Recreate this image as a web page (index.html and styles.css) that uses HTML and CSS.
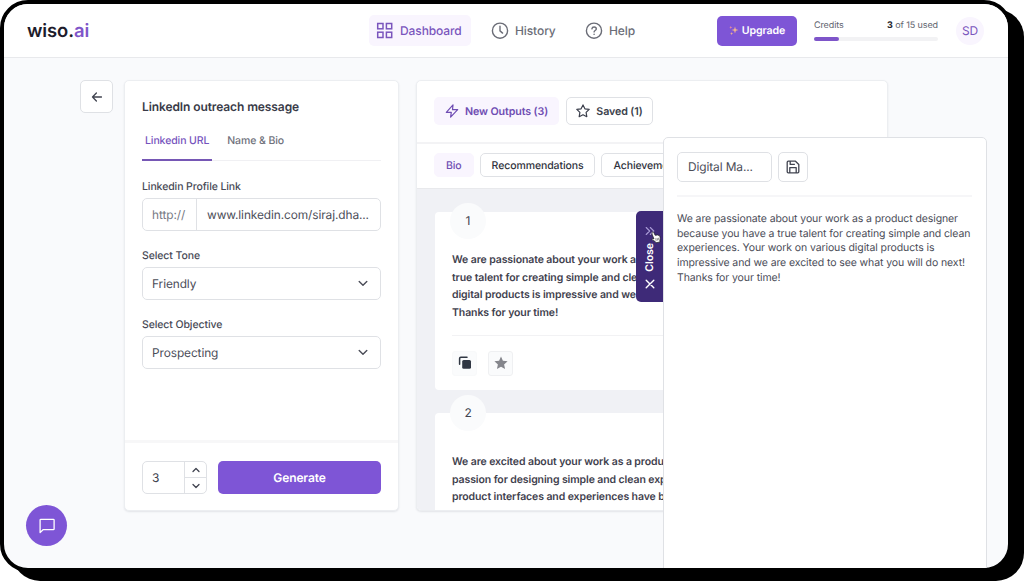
FILE: index.html
```html
<!DOCTYPE html>
<html lang="en">
<head>
    <meta charset="UTF-8">
    <meta name="viewport" content="width=device-width, initial-scale=1.0">
    <title>wiso.ai - Dashboard</title>
    <link rel="stylesheet" href="styles.css">
</head>
<body>

    <div class="window">
        <!-- Header -->
        <header class="header">
            <div class="logo">wiso<span class="dot">.</span><span class="ai">ai</span></div>

            <nav class="nav">
                <a class="nav-item active">
                    <svg width="18" height="18" viewBox="0 0 18 18" fill="none" stroke="currentColor" stroke-width="1.5"><rect x="1.7" y="1.5" width="5.3" height="5.3"/><rect x="10.4" y="1.5" width="5.3" height="5.3"/><rect x="1.7" y="10.2" width="5.3" height="5.3"/><rect x="10.4" y="10.2" width="5.3" height="5.3"/></svg>
                    <span>Dashboard</span>
                </a>
                <a class="nav-item history">
                    <svg width="18" height="18" viewBox="0 0 18 18" fill="none" stroke="currentColor" stroke-width="1.4" stroke-linecap="round"><circle cx="9" cy="8.7" r="7.6"/><path d="M9 4.2v4.7l2.6 2.2"/></svg>
                    <span>History</span>
                </a>
                <a class="nav-item help">
                    <svg width="18" height="18" viewBox="0 0 18 18" fill="none" stroke="currentColor" stroke-width="1.4" stroke-linecap="round"><circle cx="9" cy="8.7" r="7.6"/><path d="M6.9 6.9C7.1 5.600 8 5 9.100 5c1.300 0 2.200.8 2.200 1.900 0 1.500-2.200 1.700-2.200 3M9.100 12.300v.1"/></svg>
                    <span>Help</span>
                </a>
            </nav>

            <div class="account">
                <button class="btn-upgrade">
                    <svg width="10" height="11" viewBox="0 0 10 11"><path d="M6 1.500l.8 2.700 2.700.8-2.700.8L6 8.500l-.8-2.700L2.500 5l2.700-.8z" fill="#f5b98c"/><path d="M1.800.8l.4 1.200 1.200.4-1.200.4-.4 1.200-.4-1.200L.2 2.400 1.400 2z" fill="#f08f9c"/><path d="M2.600 7l.4 1.200 1.200.4-1.200.4-.4 1.200-.4-1.200L1 8.600l1.200-.4z" fill="#f5b98c"/></svg>
                    Upgrade
                </button>
                <div class="credits">
                    <div class="credits-text"><span>Credits</span><span><b>3</b> of 15 used</span></div>
                    <div class="bar"><div class="bar-fill" style="width: 20%"></div></div>
                </div>
                <div class="avatar">SD</div>
            </div>
        </header>

        <main class="main">
            <button class="btn-back">
                <svg width="12" height="12" viewBox="0 0 12 12" fill="none" stroke="currentColor" stroke-width="1.300" stroke-linecap="round" stroke-linejoin="round"><path d="M10.500 6H1.500M5.400 2L1.500 6l3.900 4"/></svg>
            </button>

            <!-- Message form -->
            <section class="form-card">
                <div class="form-body">
                    <h2>LinkedIn outreach message</h2>
                    <div class="tabs">
                        <span class="tab active">Linkedin URL</span>
                        <span class="tab">Name &amp; Bio</span>
                    </div>

                    <label>Linkedin Profile Link</label>
                    <div class="field">
                        <span class="prefix">http://</span>
                        <span class="value">www.linkedin.com/siraj.dha...</span>
                    </div>

                    <label>Select Tone</label>
                    <div class="field select">
                        <span>Friendly</span>
                        <svg width="10" height="7" viewBox="0 0 10 7" fill="none" stroke="currentColor" stroke-width="1.400" stroke-linecap="round" stroke-linejoin="round"><path d="M1.200 1.500L5 5.300l3.800-3.800"/></svg>
                    </div>

                    <label>Select Objective</label>
                    <div class="field select">
                        <span>Prospecting</span>
                        <svg width="10" height="7" viewBox="0 0 10 7" fill="none" stroke="currentColor" stroke-width="1.400" stroke-linecap="round" stroke-linejoin="round"><path d="M1.200 1.500L5 5.300l3.800-3.800"/></svg>
                    </div>
                </div>

                <div class="form-footer">
                    <div class="stepper">
                        <span class="count">3</span>
                        <div class="arrows">
                            <span><svg width="8" height="6" viewBox="0 0 8 6" fill="none" stroke="currentColor" stroke-width="1.300" stroke-linecap="round" stroke-linejoin="round"><path d="M1 4.500l3-3 3 3"/></svg></span>
                            <span><svg width="8" height="6" viewBox="0 0 8 6" fill="none" stroke="currentColor" stroke-width="1.300" stroke-linecap="round" stroke-linejoin="round"><path d="M1 1.500l3 3 3-3"/></svg></span>
                        </div>
                    </div>
                    <button class="btn-generate">Generate</button>
                </div>
            </section>

            <!-- Outputs -->
            <section class="output-card">
                <div class="output-top">
                    <button class="chip chip-new">
                        <svg width="14" height="14" viewBox="0 0 14 14" fill="none" stroke="currentColor" stroke-width="1.200" stroke-linejoin="round"><path d="M8 .9L1.300 8.300h5L5.600 13.100l7.100-7.400H7.500z"/></svg>
                        <span>New Outputs (3)</span>
                    </button>
                    <button class="chip chip-saved">
                        <svg width="14" height="14" viewBox="0 0 14 14" fill="none" stroke="currentColor" stroke-width="1.200" stroke-linejoin="round"><path d="M7 .9l1.900 3.900 4.300.6-3.100 3 .7 4.300L7 10.700l-3.800 2 .7-4.300-3.100-3 4.300-.6z"/></svg>
                        <span>Saved (1)</span>
                    </button>
                </div>
                <div class="filters">
                    <button class="filter active">Bio</button>
                    <button class="filter">Recommendations</button>
                    <button class="filter">Achievements</button>
                </div>
                <div class="results">
                    <article class="result">
                        <span class="number">1</span>
                        <p>We are passionate about your work as a<br>true talent for creating simple and clean<br>digital products is impressive and we are<br>Thanks for your time!</p>
                        <div class="actions">
                            <span class="action"><svg width="14" height="14" viewBox="0 0 14 14"><path d="M1.600 8.300V2.500Q1.600 1.300 2.800 1.300H9" fill="none" stroke="#303743" stroke-width="1.500" stroke-linecap="round"/><rect x="4.200" y="4" width="8.800" height="8.800" rx="1.500" fill="#303743"/></svg></span>
                            <span class="action bordered"><svg width="14" height="14" viewBox="0 0 14 14"><path d="M7 .4l1.900 4.300 4.700.5-3.500 3.200 1 4.700L7 10.700l-4.100 2.400 1-4.700L.4 5.200l4.700-.5z" fill="#85868c"/></svg></span>
                        </div>
                    </article>
                    <article class="result second">
                        <span class="number">2</span>
                        <p>We are excited about your work as a product<br>passion for designing simple and clean exp<br>product interfaces and experiences have b<br>in the industry, and we are proud of the</p>
                    </article>
                </div>
            </section>
        </main>

        <!-- Drawer over the outputs -->
        <aside class="drawer">
            <button class="close-tab">
                <svg width="10" height="10" viewBox="0 0 10 10" fill="none" stroke="#a99bd6" stroke-width="1.100" stroke-linecap="round" stroke-linejoin="round"><path d="M1.200 1.500L4.700 5 1.200 8.500M5.300 1.500L8.800 5 5.300 8.500"/></svg>
                <span>Close</span>
                <svg width="10" height="10" viewBox="0 0 10 10" fill="none" stroke="#fff" stroke-width="1.400" stroke-linecap="round"><path d="M1.200 1.200l7.600 7.600M8.800 1.200L1.200 8.800"/></svg>
            </button>
            <svg class="cursor" width="10" height="13" viewBox="0 0 10 13"><path d="M1.200 1.200c.7-.6 1.400-.2 1.700.5l1.300 2.700.8-.5.8.4.8-.4.8.5.8-.2c.8 1.400 1.200 2.800.9 4.200l-.3 1 .2 1.500-4 .9-.9-1.400-2.800-1.500c-.6-.6-.1-1.500.7-1.200l1 .3L1 3z" fill="#fff" stroke="#222" stroke-width=".7"/><path d="M4.700 7.300l.5 2.500M6.100 7l.5 2.500M7.500 6.800l.4 2.300" stroke="#222" stroke-width=".5"/></svg>

            <div class="drawer-head">
                <div class="title-field">Digital Ma...</div>
                <button class="btn-save">
                    <svg width="14" height="14" viewBox="0 0 14 14" fill="none" stroke="currentColor" stroke-width="1.300" stroke-linejoin="round"><path d="M2.300 1.200h7.200l3.300 3.300v7.200q0 1.100-1.100 1.100H2.300q-1.100 0-1.100-1.100V2.300q0-1.100 1.100-1.100zM3.800 12.800V7.600h6.400v5.200M4.200 1.200v3.200h4.700"/></svg>
                </button>
            </div>
            <p>We are passionate about your work as a product designer<br>because you have a true talent for creating simple and clean<br>experiences. Your work on various digital products is<br>impressive and we are excited to see what you will do next!<br>Thanks for your time!</p>
        </aside>

        <button class="chat">
            <svg width="16" height="16" viewBox="0 0 16 16" fill="none" stroke="#fff" stroke-width="1.300" stroke-linejoin="round"><path d="M1.900 1.300h12.400q.8 0 .8.8v8.800q0 .8-.8.8H4L1.100 14.600V2.100q0-.8.8-.8z"/></svg>
        </button>
    </div>

</body>
</html>
```
FILE: styles.css
```css
* {
    box-sizing: border-box;
}

body {
    margin: 0;
    height: 581px;
    overflow: hidden;
    background-color: #fff;
    font-family: Inter, "Liberation Sans", sans-serif;
    text-rendering: geometricPrecision;
    letter-spacing: -0.1px;
    color: #414450;
}

button {
    padding: 0;
    border: none;
    font-family: inherit;
    text-rendering: inherit;
    letter-spacing: inherit;
    color: inherit;
    display: flex;
    align-items: center;
    justify-content: center;
}

svg {
    display: block;
    flex-shrink: 0;
}

.window {
    position: relative;
    width: 1012px;
    height: 572px;
    border: 4px solid #000;
    border-radius: 28px;
    box-shadow: 12px 9px 0 #000;
    background-color: #f9fafc;
    overflow: hidden;
}

/* Header */
.header {
    display: flex;
    align-items: center;
    height: 54px;
    padding: 0 24px 0 23px;
    background-color: #fff;
    border-bottom: 1px solid #e8e9ec;
}

.logo {
    width: 342px;
    font-size: 18.4px;
    font-weight: 600;
    color: #1d1c2b;
}

.ai {
    color: #7f56c9;
}

.nav {
    display: flex;
    gap: 13px;
}

.nav-item {
    display: flex;
    align-items: center;
    gap: 6px;
    width: 102px;
    height: 31px;
    padding-left: 7px;
    border-radius: 5px;
    font-size: 12px;
    font-weight: 500;
    color: #6b6d77;
    white-space: nowrap;
}

.nav-item.active {
    color: #7a55bd;
    background-color: #f9f5fe;
}

.nav-item.history {
    width: 81px;
}

.nav-item.help {
    width: 65px;
}

.account {
    display: flex;
    align-items: center;
    margin-left: auto;
}

.btn-upgrade {
    gap: 3px;
    width: 80px;
    height: 30px;
    border-radius: 5px;
    background-color: #7e55d6;
    color: #fff;
    font-size: 10.6px;
    font-weight: 600;
}

.credits {
    width: 124px;
    margin: 0 18px 0 17px;
    padding-bottom: 1px;
    font-size: 9px;
    color: #62646e;
}

.credits-text {
    display: flex;
    justify-content: space-between;
    line-height: 11px;
}

.credits-text b {
    color: #25262e;
}

.bar {
    height: 4px;
    margin-top: 6px;
    border-radius: 2px;
    background-color: #f2f2f4;
}

.bar-fill {
    height: 4px;
    border-radius: 2px;
    background-color: #7e55c9;
}

.avatar {
    width: 28px;
    height: 28px;
    border-radius: 50%;
    background-color: #f9f5fe;
    color: #7a55bd;
    font-size: 12px;
    line-height: 28px;
    text-align: center;
}

/* Main columns */
.main {
    display: flex;
    align-items: flex-start;
    padding: 22px 0 0 76px;
}

.btn-back {
    width: 33px;
    height: 33px;
    margin-right: 11px;
    border: 1px solid #dfe1e5;
    border-radius: 5px;
    background-color: #fff;
}

.form-card,
.output-card {
    display: flex;
    flex-direction: column;
    height: 431px;
    border: 1px solid #eceef1;
    border-radius: 5px;
    background-color: #fff;
    box-shadow: 0 1px 2px rgba(30, 35, 60, 0.1);
    overflow: hidden;
}

.form-card {
    width: 275px;
    margin-right: 17px;
}

.form-body {
    flex: 1;
    padding: 17px 17px 0;
}

h2 {
    margin: 0;
    font-size: 12px;
    line-height: 18px;
    font-weight: 600;
    color: #393b48;
}

.tabs {
    display: flex;
    height: 45px;
    margin-bottom: 19px;
    border-bottom: 1px solid #f0f0f3;
    font-size: 10.5px;
    color: #6f717b;
}

.tab {
    height: 45px;
    padding: 18px 3px 0;
    margin-right: 12px;
    line-height: 14px;
    font-weight: 500;
}

.tab.active {
    border-bottom: 2px solid #7657b5;
    color: #7653bd;
}

label {
    display: block;
    margin-bottom: 4px;
    font-size: 10.5px;
    line-height: 14px;
    font-weight: 500;
    color: #484a56;
}

.field {
    display: flex;
    align-items: center;
    height: 33px;
    margin-bottom: 18px;
    border: 1px solid #dfe1e5;
    border-radius: 5px;
    font-size: 11.9px;
    color: #4b4d58;
}

.prefix {
    width: 54px;
    padding-left: 9px;
    border-right: 1px solid #dfe1e5;
    line-height: 31px;
    color: #777984;
}

.value {
    padding-left: 10px;
}

.select {
    justify-content: space-between;
    padding: 0 12px 0 9px;
}

.form-footer {
    display: flex;
    justify-content: space-between;
    height: 70px;
    padding: 18px 17px 0;
    border-top: 3px solid #f7f7f8;
}

.stepper {
    display: flex;
    width: 65px;
    height: 33px;
    border: 1px solid #dfe1e5;
    border-radius: 5px;
    font-size: 12px;
}

.count {
    width: 41px;
    padding-left: 9px;
    line-height: 31px;
}

.arrows {
    flex: 1;
    border-left: 1px solid #dfe1e5;
}

.arrows span {
    display: flex;
    align-items: center;
    justify-content: center;
    height: 15px;
}

.arrows span + span {
    height: 16px;
    border-top: 1px solid #dfe1e5;
}

.btn-generate {
    width: 163px;
    height: 33px;
    border-radius: 5px;
    background-color: #7e55d6;
    color: #fff;
    font-size: 12px;
    font-weight: 600;
}

/* Outputs */
.output-card {
    width: 472px;
}

.output-top {
    display: flex;
    flex-shrink: 0;
    gap: 7px;
    height: 63px;
    padding: 16px 17px 0;
    border-bottom: 2px solid #f3f3f5;
}

.chip {
    gap: 6px;
    height: 28px;
    border-radius: 5px;
    font-size: 10.7px;
    font-weight: 600;
}

.chip-new {
    width: 125px;
    background-color: #f9f5fe;
    color: #6f4db3;
}

.chip-saved {
    width: 87px;
    border: 1px solid #dfe1e5;
    background-color: #fff;
    color: #3b3f4c;
}

.filters {
    display: flex;
    flex-shrink: 0;
    gap: 6px;
    height: 45px;
    padding: 9px 17px 0;
    border-bottom: 1px solid #e8e9ec;
}

.filter {
    height: 24px;
    padding: 0 11px;
    border: 1px solid #dfe1e5;
    border-radius: 5px;
    background-color: #fff;
    font-size: 10.5px;
    font-weight: 500;
    color: #2f323c;
}

.filter.active {
    border-color: #f9f5fe;
    background-color: #f9f5fe;
    color: #6f4db3;
}

.results {
    flex: 1;
    min-height: 0;
    padding: 23px 18px 0;
    background-color: #f0f1f5;
    overflow: hidden;
}

.result {
    position: relative;
    height: 178px;
    margin-bottom: 23px;
    padding: 39px 17px 0;
    border-radius: 4px;
    background-color: #fff;
}

.result.second {
    padding-top: 40px;
}

.number {
    position: absolute;
    left: 15px;
    top: -9px;
    width: 36px;
    height: 36px;
    border-radius: 50%;
    background-color: #fafbfc;
    font-size: 12px;
    line-height: 36px;
    text-align: center;
}

.second .number {
    top: -18px;
}

.result p {
    margin: 0;
    font-size: 10.5px;
    line-height: 17.7px;
    font-weight: 600;
    color: #3f414e;
    white-space: nowrap;
}

.actions {
    display: flex;
    gap: 11px;
    margin-top: 13px;
    padding-top: 15px;
    border-top: 1px solid #f2f2f4;
}

.action {
    display: flex;
    align-items: center;
    justify-content: center;
    width: 25px;
    height: 25px;
    border: 1px solid #f8f9fa;
    border-radius: 3px;
    background-color: #fafbfc;
}

.action.bordered {
    border-color: #eff0f2;
}

/* Drawer */
.drawer {
    position: absolute;
    left: 659px;
    top: 133px;
    width: 324px;
    height: 441px;
    padding: 14px 14px 0 13px;
    border: 1px solid #dfe1e5;
    border-radius: 5px;
    background-color: #fff;
}

.drawer-head {
    display: flex;
    gap: 6px;
    height: 45px;
    margin-bottom: 15px;
    border-bottom: 2px solid #f6f6f8;
}

.title-field {
    width: 95px;
    height: 30px;
    padding-left: 10px;
    border: 1px solid #dfe1e5;
    border-radius: 5px;
    font-size: 11.9px;
    line-height: 28px;
    color: #4b4d58;
}

.btn-save {
    width: 30px;
    height: 30px;
    border: 1px solid #dfe1e5;
    border-radius: 5px;
    background-color: #fff;
}

.drawer p {
    margin: 0;
    font-size: 10.5px;
    line-height: 14.7px;
    color: #4b4d58;
    white-space: nowrap;
}

.close-tab {
    position: absolute;
    left: -28px;
    top: 73px;
    flex-direction: column;
    gap: 7px;
    width: 27px;
    height: 91px;
    padding-top: 2px;
    border-radius: 5px 0 0 5px;
    background-color: #3e2a78;
    color: #fff;
    font-size: 10.6px;
    font-weight: 600;
}

.close-tab span {
    writing-mode: vertical-rl;
    transform: rotate(180deg);
}

.cursor {
    position: absolute;
    left: -13px;
    top: 93px;
}

.chat {
    position: absolute;
    left: 22px;
    top: 501px;
    width: 41px;
    height: 41px;
    border-radius: 50%;
    background-color: #7e55d6;
}
```
